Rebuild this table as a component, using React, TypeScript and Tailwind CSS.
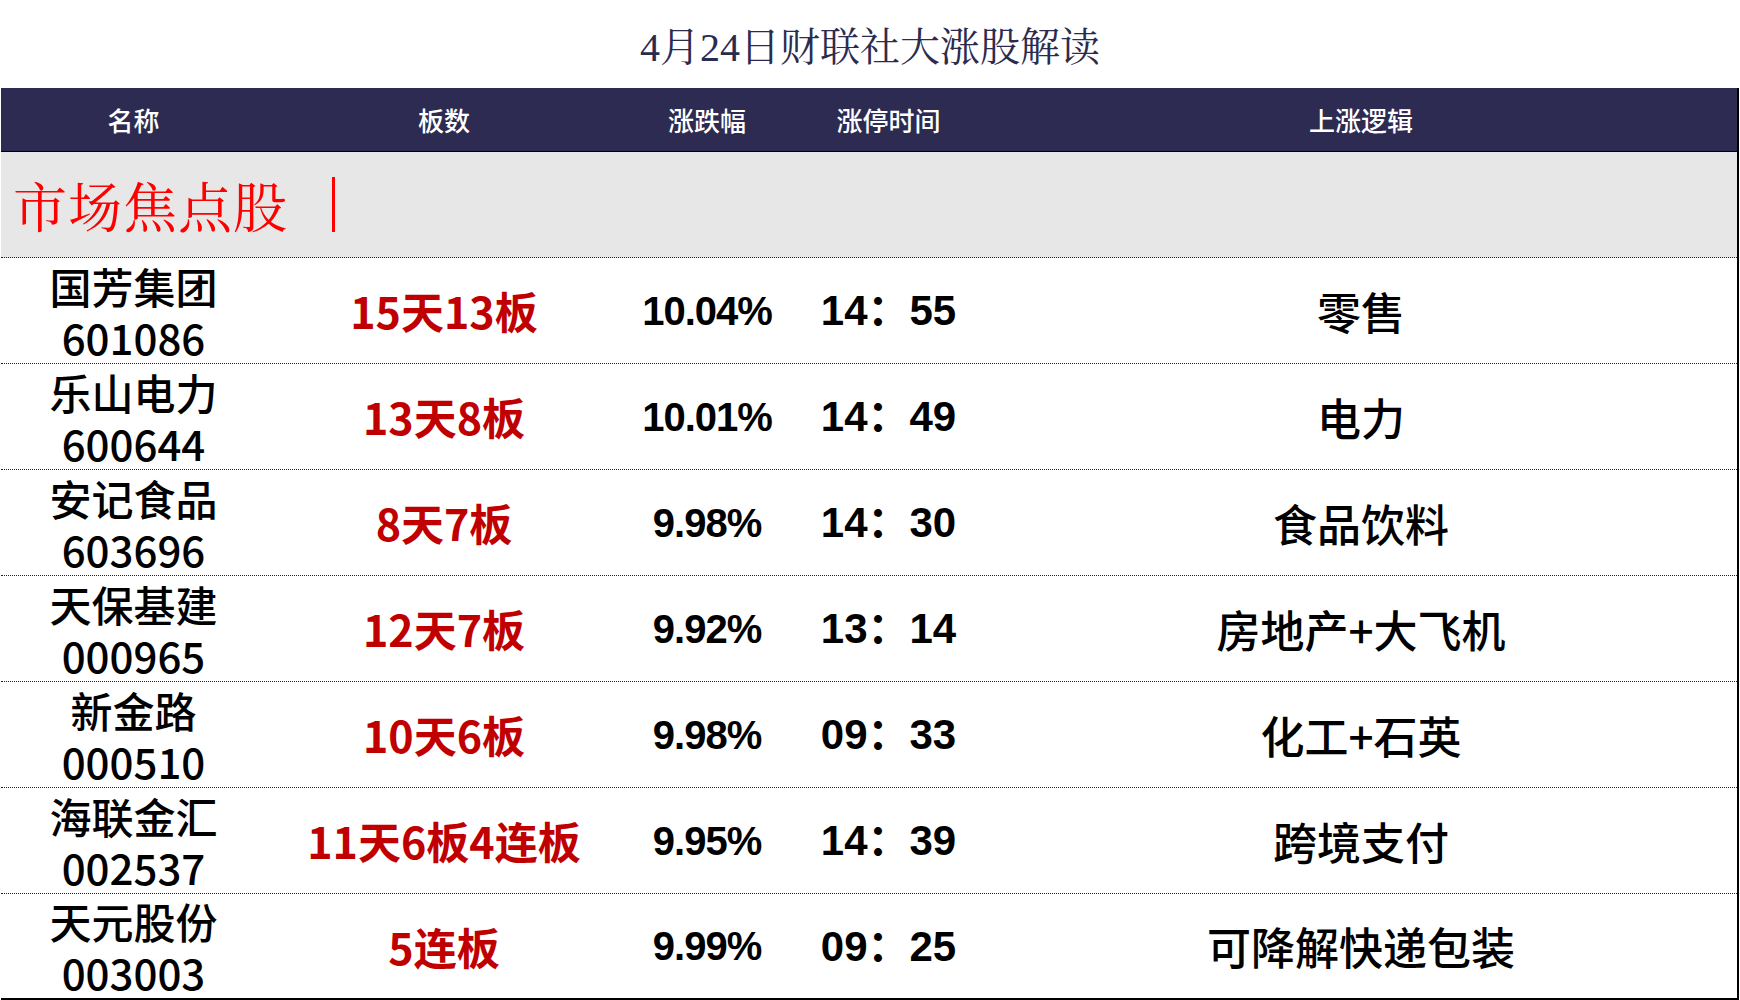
import React from 'react';

// --- Row data for the 涨停 table ---
interface StockRow {
  name: string;
  code: string;
  boards: string;
  change: string;
  time: string;
  logic: string;
}

const rows: StockRow[] = [
  { name: '国芳集团', code: '601086', boards: '15天13板', change: '10.04%', time: '14：55', logic: '零售' },
  { name: '乐山电力', code: '600644', boards: '13天8板', change: '10.01%', time: '14：49', logic: '电力' },
  { name: '安记食品', code: '603696', boards: '8天7板', change: '9.98%', time: '14：30', logic: '食品饮料' },
  { name: '天保基建', code: '000965', boards: '12天7板', change: '9.92%', time: '13：14', logic: '房地产+大飞机' },
  { name: '新金路', code: '000510', boards: '10天6板', change: '9.98%', time: '09：33', logic: '化工+石英' },
  { name: '海联金汇', code: '002537', boards: '11天6板4连板', change: '9.95%', time: '14：39', logic: '跨境支付' },
  { name: '天元股份', code: '003003', boards: '5连板', change: '9.99%', time: '09：25', logic: '可降解快递包装' },
];

const GRID = 'grid grid-cols-[265px_356px_170px_193px_1fr]';
const SANS = "font-['Noto_Sans_CJK_SC',sans-serif]";
const NUM = "font-['Liberation_Sans','Noto_Sans_CJK_SC',sans-serif]";

export default function App() {
  return (
    <div className="w-[1740px] h-[1000px] bg-white overflow-hidden">
      <div className="h-[88px] flex items-center justify-center pt-[8px]">
        <h1 className="text-[40px] leading-none text-[#2b2b50] font-normal font-['Liberation_Serif','Noto_Serif_CJK_SC','Noto_Sans_CJK_SC',serif]">
          4月24日财联社大涨股解读
        </h1>
      </div>

      <div className="ml-[1px] w-[1738px] border-r-2 border-black">
        {/* header bar */}
        <div className={`${GRID} h-[64px] bg-[#2d2b52] border-b border-black items-center text-white text-[26px] font-medium ${SANS}`}>
          <div className="text-center">名称</div>
          <div className="text-center">板数</div>
          <div className="text-center">涨跌幅</div>
          <div className="text-center">涨停时间</div>
          <div className="text-center">上涨逻辑</div>
        </div>

        {/* section label */}
        <div className="h-[106px] bg-[#e7e7e7] border-b border-dotted border-[#222] flex items-center pl-[12px]">
          <span className="text-[54px] leading-none text-[#ff0000] tracking-[1px] font-['Noto_Serif_CJK_SC','Liberation_Serif','Noto_Sans_CJK_SC',serif]">
            市场焦点股
          </span>
          <div className="ml-[44px] w-[3px] h-[55px] bg-[#ff0000]" />
        </div>

        {rows.map((r, i) => (
          <div
            key={r.code}
            className={`${GRID} h-[106px] items-center ${i === rows.length - 1 ? 'border-b-2 border-solid border-black' : 'border-b border-dotted border-[#222]'}`}
          >
            <div className={`text-center text-black text-[42px] leading-[51px] font-medium ${SANS}`}>
              <p>{r.name}</p>
              <p>{r.code}</p>
            </div>
            <div className={`text-center text-[#c00000] text-[43px] font-bold ${SANS}`}>{r.boards}</div>
            <div className={`text-center text-black text-[40px] font-bold tracking-[-1px] ${NUM}`}>{r.change}</div>
            <div className={`text-center text-black text-[42px] font-bold ${NUM}`}>{r.time}</div>
            <div className={`text-center text-black text-[44px] font-medium ${SANS}`}>{r.logic}</div>
          </div>
        ))}
      </div>
    </div>
  );
}
